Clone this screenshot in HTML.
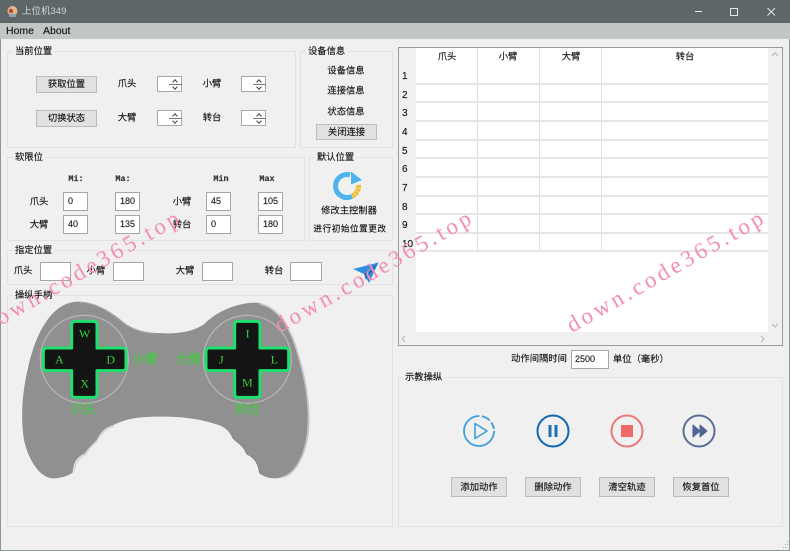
<!DOCTYPE html>
<html><head><meta charset="utf-8">
<style>
html,body{margin:0;padding:0;width:790px;height:551px;overflow:hidden;background:#f0f0f0}
#w{position:absolute;left:0;top:0;width:790px;height:551px;filter:blur(.35px);overflow:hidden;background:#f0f0f0;font-family:"Liberation Sans","Noto Sans CJK SC",sans-serif;font-size:9.3px;color:#111;-webkit-text-stroke:.15px #222}
div{box-sizing:border-box}
.a{position:absolute}
.t{position:absolute;transform:translate(-50%,-50%);white-space:nowrap;line-height:1}
.g{position:absolute;border:1px solid #e2e2e2}
.gt{position:absolute;background:#f0f0f0;padding:0 2px;line-height:12px;white-space:nowrap;font-size:9.3px}
.b{position:absolute;background:#e1e1e1;border:1px solid #bcbcbc;text-align:center;white-space:nowrap}
.i{position:absolute;background:#fff;border:1px solid #a6a6a6;font-size:9px;line-height:16px;padding-left:4px;color:#222}
.s{position:absolute;width:25px;height:16px;background:#fff;border:1px solid #a8a8a8}
.s:before{content:"";position:absolute;left:11px;top:7px;width:13px;height:1px;background:#777}
.s:after{content:"";position:absolute;left:15px;top:3px;width:3px;height:3px;border-left:1px solid #444;border-top:1px solid #444;transform:rotate(45deg)}
.s i{position:absolute;left:15px;top:8px;width:3px;height:3px;border-right:1px solid #444;border-bottom:1px solid #444;transform:rotate(45deg)}
.m{position:absolute;font-family:"Liberation Mono",monospace;font-weight:bold;font-size:8.5px;transform:translate(-50%,-50%);color:#333}
.hl{position:absolute;background:#e6e6e6;left:416px;width:352px;height:1.5px}
.vl{position:absolute;background:#e0e0e0;top:48px;height:203px;width:1px}
</style></head>
<body>
<div id="w">
<!-- title bar -->
<div class="a" style="left:0;top:0;width:790px;height:23px;background:#5e6768"></div>
<div class="a" style="left:0;top:23px;width:790px;height:16px;background:#c3c6c6"></div>
<svg class="a" style="left:0;top:0" width="790" height="24">
<circle cx="12.5" cy="11" r="5" fill="#e8b48c"/><circle cx="11" cy="11" r="2.2" fill="#b0503c"/><rect x="9" y="14" width="7" height="3" fill="#8aa0b8"/>
<path d="M695 11.5H702" stroke="#e8e8e8" stroke-width="1"/>
<rect x="730.5" y="8.5" width="7" height="7" fill="none" stroke="#e8e8e8"/>
<path d="M767.5 8L775 15.5M775 8L767.5 15.5" stroke="#e8e8e8"/>
</svg>
<div class="a" style="left:22px;top:6px;color:#d2d5d5;font-size:9.5px;line-height:12px;-webkit-text-stroke:0">上位机349</div>
<div class="a" style="left:6px;top:25px;font-size:10.5px;line-height:13px">Home</div>
<div class="a" style="left:43px;top:25px;font-size:10.5px;line-height:13px">About</div>

<!-- groups -->
<div class="g" style="left:7px;top:51px;width:289px;height:97px"></div><div class="gt" style="left:13px;top:45px">当前位置</div>
<div class="g" style="left:300px;top:51px;width:93px;height:97px"></div><div class="gt" style="left:306px;top:45px">设备信息</div>
<div class="g" style="left:7px;top:157px;width:298px;height:84px"></div><div class="gt" style="left:13px;top:151px">软限位</div>
<div class="g" style="left:309px;top:157px;width:84px;height:84px"></div><div class="gt" style="left:315px;top:151px">默认位置</div>
<div class="g" style="left:7px;top:250px;width:386px;height:35px"></div><div class="gt" style="left:13px;top:244px">指定位置</div>
<div class="g" style="left:7px;top:295px;width:386px;height:232px"></div><div class="gt" style="left:13px;top:289px">操纵手柄</div>

<!-- current position -->
<div class="b" style="left:36px;top:76px;width:61px;height:17px;line-height:15px">获取位置</div>
<div class="b" style="left:36px;top:110px;width:61px;height:17px;line-height:15px">切换状态</div>
<div class="t" style="left:127px;top:84px">爪头</div><div class="t" style="left:212px;top:84px">小臂</div>
<div class="t" style="left:127px;top:118px">大臂</div><div class="t" style="left:212px;top:118px">转台</div>
<div class="s" style="left:157px;top:76px"><i></i></div><div class="s" style="left:241px;top:76px"><i></i></div>
<div class="s" style="left:157px;top:110px"><i></i></div><div class="s" style="left:241px;top:110px"><i></i></div>

<!-- device -->
<div class="t" style="left:346px;top:71px">设备信息</div>
<div class="t" style="left:346px;top:91px">连接信息</div>
<div class="t" style="left:346px;top:112px">状态信息</div>
<div class="b" style="left:316px;top:124px;width:61px;height:16px;line-height:14px">关闭连接</div>

<!-- limits -->
<div class="m" style="left:76px;top:179px">Mi:</div><div class="m" style="left:123px;top:179px">Ma:</div>
<div class="m" style="left:221px;top:179px">Min</div><div class="m" style="left:267px;top:179px">Max</div>
<div class="t" style="left:39px;top:202px">爪头</div><div class="t" style="left:39px;top:225px">大臂</div>
<div class="t" style="left:182px;top:202px">小臂</div><div class="t" style="left:182px;top:225px">转台</div>
<div class="i" style="left:63px;top:192px;width:25px;height:19px">0</div>
<div class="i" style="left:115px;top:192px;width:25px;height:19px">180</div>
<div class="i" style="left:206px;top:192px;width:25px;height:19px">45</div>
<div class="i" style="left:258px;top:192px;width:25px;height:19px">105</div>
<div class="i" style="left:63px;top:215px;width:25px;height:19px">40</div>
<div class="i" style="left:115px;top:215px;width:25px;height:19px">135</div>
<div class="i" style="left:206px;top:215px;width:25px;height:19px">0</div>
<div class="i" style="left:258px;top:215px;width:25px;height:19px">180</div>

<!-- default position -->
<svg class="a" style="left:325px;top:165px" width="44" height="40" viewBox="325 165 44 40">
<path d="M350 174.9A11.5 11.5 0 1 0 352 196.4" fill="none" stroke="#4db4ee" stroke-width="5"/>
<path d="M358.5 185A11.5 11.5 0 0 1 352 196.4" fill="none" stroke="#f2bd32" stroke-width="5" stroke-dasharray="3 .5"/>
<path d="M351 171.5L362 180L351 184.5Z" fill="#4db4ee"/>
</svg>
<div class="t" style="left:349px;top:211px">修改主控制器</div>
<div class="t" style="left:350px;top:229px;font-size:8.6px;letter-spacing:.55px">进行初始位置更改</div>

<!-- designated position -->
<div class="t" style="left:23px;top:271px">爪头</div><div class="t" style="left:96px;top:271px">小臂</div>
<div class="t" style="left:185px;top:271px">大臂</div><div class="t" style="left:274px;top:271px">转台</div>
<div class="i" style="left:40px;top:262px;width:31px;height:19px"></div>
<div class="i" style="left:113px;top:262px;width:31px;height:19px"></div>
<div class="i" style="left:202px;top:262px;width:31px;height:19px"></div>
<div class="i" style="left:290px;top:262px;width:32px;height:19px"></div>
<svg class="a" style="left:350px;top:258px" width="32" height="28" viewBox="350 258 32 28">
<path d="M353 269L378.5 262.5L369 283L364 274Z" fill="#2f8ee0"/><path d="M364 274L378.5 262.5L366 280Z" fill="#1d6fc0"/>
</svg>

<!-- gamepad -->
<svg class="a" style="left:0;top:290px;-webkit-text-stroke:0" width="400" height="261" viewBox="0 0 1200 783">
<path d="M235 35C290 35 340 70 375 100C410 125 450 130 500 130C550 130 590 120 615 100C650 65 710 38 770 38C830 45 870 110 895 190C920 270 932 350 927 420C920 500 880 565 825 565C800 565 785 555 778 550C775 520 765 505 738 490C730 465 700 450 695 440C685 415 660 405 640 400C590 385 540 380 490 380C440 380 390 380 340 405C310 415 300 430 290 450C270 470 260 480 255 490C230 500 220 520 218 548C200 560 180 565 160 565C120 565 85 510 72 450C62 390 65 310 85 230C110 120 160 35 235 35Z" fill="#909090"/>
<path d="M780 42C835 52 872 115 893 190C918 270 930 350 924 420C918 495 885 555 845 562" fill="none" stroke="#c6c6c6" stroke-width="5"/>
<path d="M375 102C410 125 430 128 460 131M240 37C290 37 335 70 372 100" fill="none" stroke="#a8a8a8" stroke-width="3"/>
<path d="M222 545C224 520 235 505 258 492C262 480 275 468 292 452C302 430 315 418 342 407" fill="none" stroke="#d0d0d0" stroke-width="4"/>
<path d="M697 442C702 452 732 465 740 492C765 505 775 520 778 548" fill="none" stroke="#777" stroke-width="2"/>
<circle cx="253" cy="208" r="132" fill="none" stroke="#b4b4b4" stroke-width="4"/>
<circle cx="742" cy="208" r="132" fill="none" stroke="#b4b4b4" stroke-width="4"/>
<g fill="#141414" stroke="#1fe06e" stroke-width="9" stroke-linejoin="round">
<path d="M225 94H281Q291 94 291 104V174H368Q378 174 378 184V232Q378 242 368 242H291V312Q291 322 281 322H225Q215 322 215 312V242H140Q130 242 130 232V184Q130 174 140 174H215V104Q215 94 225 94Z"/>
<path d="M714 94H770Q780 94 780 104V174H856Q866 174 866 184V232Q866 242 856 242H780V312Q780 322 770 322H714Q704 322 704 312V242H628Q618 242 618 232V184Q618 174 628 174H704V104Q704 94 714 94Z"/>
</g>
<g font-family="Liberation Serif,serif" font-size="36" fill="#35d03a" text-anchor="middle">
<text x="254" y="143">W</text><text x="178" y="220">A</text><text x="332" y="220">D</text><text x="254" y="292">X</text>
<text x="743" y="143">I</text><text x="664" y="220">J</text><text x="823" y="220">L</text><text x="742" y="290">M</text>
</g>
<g font-family="Liberation Sans,'Noto Sans CJK SC',sans-serif" font-size="37" fill="#4cc44c" stroke="#4cc44c" stroke-width="1" text-anchor="middle">
<text x="435" y="221">小臂</text><text x="565" y="221">大臂</text>
<text x="250" y="371">爪头</text><text x="742" y="371">转台</text>
</g>
</svg>

<!-- table -->
<div class="a" style="left:398px;top:47px;width:385px;height:299px;background:#fff;border:1px solid #9a9a9a"></div>
<div class="a" style="left:399px;top:48px;width:17px;height:284px;background:#f0f0f0"></div>
<div class="a" style="left:768px;top:48px;width:14px;height:284px;background:#f0f0f0"></div>
<div class="a" style="left:399px;top:332px;width:383px;height:13px;background:#f0f0f0"></div>
<div class="vl" style="left:477px"></div><div class="vl" style="left:539px"></div><div class="vl" style="left:601px"></div>
<div class="hl" style="top:83px"></div><div class="hl" style="top:101px"></div><div class="hl" style="top:120px"></div>
<div class="hl" style="top:139px"></div><div class="hl" style="top:157px"></div><div class="hl" style="top:176px"></div>
<div class="hl" style="top:195px"></div><div class="hl" style="top:213px"></div><div class="hl" style="top:232px"></div><div class="hl" style="top:250px"></div>
<div class="t" style="left:447px;top:57px">爪头</div><div class="t" style="left:508px;top:57px">小臂</div>
<div class="t" style="left:571px;top:57px">大臂</div><div class="t" style="left:685px;top:57px">转台</div>
<div class="a" style="left:402px;top:66px;font-size:10px;line-height:18.67px;padding-top:2px">1<br>2<br>3<br>4<br>5<br>6<br>7<br>8<br>9<br>10</div>
<svg class="a" style="left:395px;top:40px" width="395" height="310" viewBox="395 40 395 310">
<path d="M772 56L775 53L778 56M772 324L775 327L778 324" fill="none" stroke="#b5b5b5"/>
<path d="M405 336L402 339L405 342M761 336L764 339L761 342" fill="none" stroke="#b5b5b5"/>
</svg>

<!-- interval -->
<div class="t" style="left:539px;top:359px">动作间隔时间</div>
<div class="i" style="left:571px;top:350px;width:38px;height:19px;padding-left:3px">2500</div>
<div class="a" style="left:613px;top:354px;white-space:nowrap;line-height:11px">单位（毫秒）</div>

<!-- teach -->
<div class="g" style="left:398px;top:377px;width:385px;height:150px"></div><div class="gt" style="left:403px;top:371px">示教操纵</div>
<svg class="a" style="left:460px;top:410px" width="260" height="42" viewBox="460 410 260 42">
<circle cx="479" cy="431" r="15" fill="none" stroke="#3f9fdc" stroke-width="1.8" stroke-dasharray="71 2.5 9 2.5 7 2.2"/>
<path d="M475 423.5L487 431L475 438.5Z" fill="none" stroke="#3f9fdc" stroke-width="1.6" stroke-linejoin="round"/>
<circle cx="553" cy="431" r="15.5" fill="none" stroke="#0f67b1" stroke-width="2"/>
<rect x="548.5" y="425" width="3" height="12" fill="#1b72b8"/><rect x="554.5" y="425" width="3" height="12" fill="#1b72b8"/>
<circle cx="627" cy="431" r="15.5" fill="none" stroke="#e87878" stroke-width="2"/>
<rect x="621" y="425" width="12" height="12" fill="#f26b6b"/>
<circle cx="699" cy="431" r="15.5" fill="none" stroke="#5a6d96" stroke-width="2"/>
<path d="M693 425L700 431L693 437ZM700 425L707 431L700 437Z" fill="#4f6695" stroke="#4f6695" stroke-linejoin="round"/>
</svg>
<div class="b" style="left:451px;top:477px;width:56px;height:20px;line-height:18px">添加动作</div>
<div class="b" style="left:525px;top:477px;width:56px;height:20px;line-height:18px">删除动作</div>
<div class="b" style="left:599px;top:477px;width:56px;height:20px;line-height:18px">清空轨迹</div>
<div class="b" style="left:673px;top:477px;width:56px;height:20px;line-height:18px">恢复首位</div>

<!-- window border & grip -->
<div class="a" style="left:0;top:39px;width:1px;height:512px;background:#8f9696"></div>
<div class="a" style="left:789px;top:39px;width:1px;height:512px;background:#8f9696"></div>
<div class="a" style="left:0;top:550px;width:790px;height:1px;background:#8f9696"></div>
<svg class="a" style="left:780px;top:540px" width="9" height="10"><path d="M7 1h1v1H7zM5 4h1v1H5zM7 4h1v1H7zM3 7h1v1H3zM5 7h1v1H5zM7 7h1v1H7z" fill="#aaa"/></svg>

<!-- watermarks -->
<svg class="a" style="left:0;top:0;pointer-events:none;-webkit-text-stroke:0" width="790" height="551">
<g font-family="Liberation Serif,serif" font-size="23" fill="#f48db0">
<text transform="translate(-12 333) rotate(-29.7)" textLength="222">down.code365.top</text>
<text transform="translate(280 333) rotate(-29.7)" textLength="222">down.code365.top</text>
<text transform="translate(572 333) rotate(-29.7)" textLength="222">down.code365.top</text>
</g>
</svg>
</div>
</body></html>
